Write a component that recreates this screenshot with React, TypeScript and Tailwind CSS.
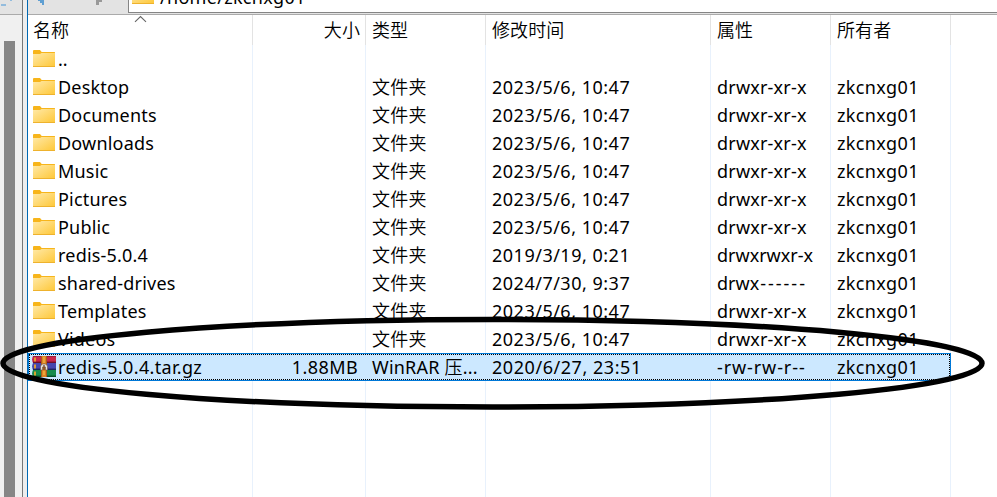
type Entry = { name: string; date: string; mode: string; dashes?: string; modeClass?: string };

const modified = '2023/5/6, 10:47';
const entries: Entry[] = [
  { name: 'Desktop', date: modified, mode: 'drwxr-xr-x' },
  { name: 'Documents', date: modified, mode: 'drwxr-xr-x' },
  { name: 'Downloads', date: modified, mode: 'drwxr-xr-x' },
  { name: 'Music', date: modified, mode: 'drwxr-xr-x' },
  { name: 'Pictures', date: modified, mode: 'drwxr-xr-x' },
  { name: 'Public', date: modified, mode: 'drwxr-xr-x' },
  { name: 'redis-5.0.4', date: '2019/3/19, 0:21', mode: 'drwxrwxr-x', modeClass: 'tracking-[0px]' },
  { name: 'shared-drives', date: '2024/7/30, 9:37', mode: 'drwx', dashes: '------', modeClass: 'tracking-[0px]' },
  { name: 'Templates', date: modified, mode: 'drwxr-xr-x' },
  { name: 'Videos', date: modified, mode: 'drwxr-xr-x' },
];

const columns = 'grid grid-cols-[225px_113px_120px_225px_120px_120px]';

function Folder() {
  return (
    <svg className="block shrink-0" width="22" height="18" viewBox="0 0 22 18">
      <defs>
        <linearGradient id="folder" x1="0" y1="0" x2="1" y2="1">
          <stop offset="0" stopColor="#ffe9a8" />
          <stop offset="1" stopColor="#fec736" />
        </linearGradient>
      </defs>
      <path d="M0 1Q0 0 1 0H7L8.7 2H21.5Q22 2 22 2.5V5H0Z" fill="#f7b51b" />
      <path d="M0 4H7L8.5 3H22V16.5Q22 17 21.3 17H.7Q0 17 0 16.5Z" fill="url(#folder)" />
      <path d="M0 16.5H22" stroke="#eeb22d" />
    </svg>
  );
}

function Archive() {
  return (
    <svg className="block shrink-0" width="24" height="22" viewBox="0 0 24 22">
      <path d="M1 0H24V7H1Q-.8 3.5 1 0Z" fill="#c9264a" />
      <path d="M1 7H24V14H1Q-.8 10.5 1 7Z" fill="#4647ae" />
      <path d="M1 14H24V21H1Q-.8 17.5 1 14Z" fill="#168b4c" />
      <path d="M1 .5H24" stroke="#a01b3c" />
      <path d="M1 6.3H24" stroke="#6e1029" strokeWidth="1.4" />
      <path d="M1 13.3H24" stroke="#20255e" strokeWidth="1.4" />
      <path d="M1 20.3H24" stroke="#07502b" strokeWidth="1.4" />
      <path d="M3 1.5V5.5M3 8.5V12.5M3 15.5V19.5" stroke="#eda52c" strokeWidth="1.8" />
      <path d="M9 0H15V21H9Z" fill="#dd8422" />
      <path d="M9.5 0V21M14.5 0V21" stroke="#a85c1c" />
      <path d="M11 2H13M11 4H13M11 6H13M11 16H13M11 18H13" stroke="#f9c653" />
      <path d="M8.5 14V10L10.5 8H13.5L15.5 10V14H13.5V11H10.5V14Z" fill="#e7e2d8" stroke="#63534e" strokeWidth=".6" />
      <path d="M12 9V14" stroke="#6b3f20" strokeWidth="1.2" />
    </svg>
  );
}

function Row({ entry }: { entry: Entry }) {
  return (
    <div className={`${columns} h-7 leading-7`}>
      <div className="flex items-center gap-[3px] pl-[5px]">
        <Folder />
        <span className="tracking-[0.2px]">{entry.name}</span>
      </div>
      <span />
      <span className="pl-[6px] font-[350] tracking-[0.2px]">文件夹</span>
      <span className="pl-[6px] tracking-[0.5px]">{entry.date}</span>
      <span className={`pl-[6px] ${entry.modeClass ?? 'tracking-[0.2px]'}`}>
        {entry.mode}
        {entry.dashes && <span className="ml-px tracking-[2px]">{entry.dashes}</span>}
      </span>
      <span className="pl-[6px] tracking-[0.35px]">zkcnxg01</span>
    </div>
  );
}

function Toolbar() {
  return (
    <div className="flex h-[15px] overflow-hidden border-b border-[#aaaaaa] bg-[#e3e3e3]">
      <svg className="block w-[100px] shrink-0" height="14" viewBox="0 0 100 14">
        <path d="M10 0H16V5H14V3H12V1H10Z" fill="#5f9fd2" />
        <path d="M68 0H74V2H71V5H68Z" fill="#999" />
      </svg>
      <div className="flex h-[13px] flex-1 border-b border-l border-[#858585] bg-white pl-[3px]">
        <div className="-mt-[13px]"><Folder /></div>
        <span className="-mt-[15px] ml-[6px] leading-6 tracking-[0.3px]">/home/zkcnxg01</span>
      </div>
    </div>
  );
}

export default function App() {
  return (
    <div className="relative flex h-[497px] w-[997px] overflow-hidden bg-white font-['Noto_Sans','Noto_Sans_CJK_SC',sans-serif] text-[18px] whitespace-pre text-black">
      <aside className="flex w-[23px] shrink-0 flex-col border-r border-[#777777] bg-[#f0f0f0]">
        <div className="h-[15px] border-b border-[#aaaaaa] bg-[#e3e3e3]">
          <svg className="block" width="22" height="14" viewBox="0 0 22 14">
            <path d="M1 5H6M10 0H12" stroke="#79b0dc" strokeWidth="1.5" />
          </svg>
        </div>
        <div className="mt-[26px] ml-1 w-[11px] flex-1 bg-[#868686]" />
      </aside>
      <div className="w-1 shrink-0 bg-[#ededed]" />
      <main className="flex min-w-0 flex-1 flex-col border-l border-[#0068b3]">
        <Toolbar />
        <div className="relative flex-1">
          <div className={`${columns} absolute inset-y-0 left-0`}>
            {[0, 1, 2, 3, 4, 5].map((n) => (
              <div key={n} className="flex flex-col">
                <i className="h-[30px] border-r border-[#e3e3e3]" />
                <i className="flex-1 border-r border-[#e8f1fc]" />
              </div>
            ))}
          </div>
          <svg className="absolute top-0 left-[106px]" width="13" height="9" viewBox="0 0 13 9">
            <path d="M1 6.8L6.5 1.5L12 6.8" fill="none" stroke="#666" strokeWidth="1.1" />
          </svg>
          <div className="relative">
            <div className={`${columns} h-[30px] leading-[31px] font-[350] tracking-[0.1px]`}>
              <span className="pl-[5px]">名称</span>
              <span className="pr-[6px] text-right">大小</span>
              <span className="pl-[6px]">类型</span>
              <span className="pl-[6px]">修改时间</span>
              <span className="pl-[6px]">属性</span>
              <span className="pl-[6px]">所有者</span>
            </div>
            <div className="flex h-7 items-center gap-[3px] pl-[5px]">
              <Folder />
              <span>..</span>
            </div>
            {entries.map((entry) => <Row key={entry.name} entry={entry} />)}
            <div className="h-7 w-[923px] border border-[#0078d7] bg-[#cce8ff]">
              <div className={`${columns} h-[26px] w-[921px] border border-dotted border-black leading-6`}>
                <div className="flex items-center gap-[2px] pl-[2px]">
                  <Archive />
                  <span className="tracking-[0.33px]">redis-5.0.4.tar.gz</span>
                </div>
                <span className="pr-[10px] text-right tracking-[0.4px]">1.88MB</span>
                <span className="pl-[4px] tracking-[0.2px]">WinRAR <span className="font-[350]">压</span>...</span>
                <span className="pl-[4px] tracking-[0.55px]">2020/6/27, 23:51</span>
                <span className="pl-[4px] tracking-[0.9px]">-rw-rw-r--</span>
                <span className="pl-[4px] tracking-[0.35px]">zkcnxg01</span>
              </div>
            </div>
          </div>
        </div>
      </main>
      <svg className="pointer-events-none absolute inset-0" width="997" height="497" viewBox="0 0 997 497">
        <ellipse cx="492.5" cy="363.2" rx="489.5" ry="43.8" fill="none" stroke="#000" strokeWidth="5.5" />
      </svg>
    </div>
  );
}
